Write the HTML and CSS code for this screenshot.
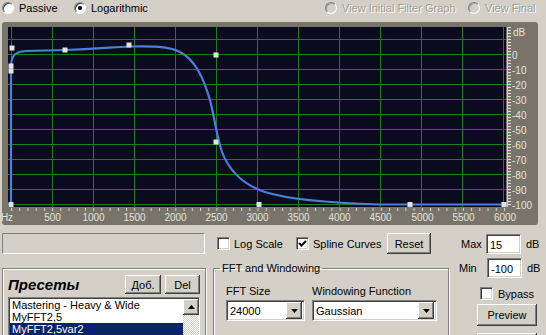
FILE: index.html
```html
<!DOCTYPE html>
<html lang="en">
<head>
    <meta charset="UTF-8">
    <title>FFT Filter</title>
    <link rel="stylesheet" href="styles.css">
</head>
<body>

    <div class="top">
        <label class="radio r1"><span class="dot"></span>Passive</label>
        <label class="radio r2"><span class="dot on"></span>Logarithmic</label>
        <label class="radio r3 off"><span class="dot"></span>View Initial Filter Graph</label>
        <label class="radio r4 off"><span class="dot"></span>View Final</label>
    </div>

    <div class="graph">
        <svg width="536" height="203" viewBox="2 22 536 203">
            <defs>
                <pattern id="xticks" x="11" y="207" width="8.2167" height="5" patternUnits="userSpaceOnUse">
                    <rect x="0" y="1" width="1" height="3" fill="#d8d4cc"/>
                </pattern>
                <pattern id="yticks" x="507" y="27" width="6" height="3" patternUnits="userSpaceOnUse">
                    <rect x="1" y="0" width="3" height="1" fill="#e8dede"/>
                </pattern>
            </defs>
            <rect x="8" y="27" width="498" height="180" fill="#0b0b1f"/>
            <path class="grid" d="M11.5 27V207M52.5 27V207M93.5 27V207M134.5 27V207M175.5 27V207M216.5 27V207M257.5 27V207M298.5 27V207M339.5 27V207M380.5 27V207M421.5 27V207M462.5 27V207M503.5 27V207
                M8 39.5H506M8 54.5H506M8 69.5H506M8 84.5H506M8 99.5H506M8 114.5H506M8 129.5H506M8 144.5H506M8 159.5H506M8 174.5H506M8 189.5H506M8 204.5H506"/>

            <rect x="11" y="207" width="495" height="5" fill="url(#xticks)"/>
            <rect x="507" y="27" width="6" height="180" fill="url(#yticks)"/>
            <path d="M507.5 27V207" stroke="#d8cccc" stroke-width="1"/>

            <path class="curve" d="M11,205 L11,68 C11,56 14,52 26,51 L65,50 C95,49 115,47 129,46.5 C150,46 170,46 180,52 C196,60 204,80 210,100 C215,120 217,138 222,152 C230,173 244,185 265,192 C290,200 330,203 380,204.5 L504,204.5"/>

            <g class="pts">
                <rect x="9.5" y="45.5" width="5" height="5"/>
                <rect x="8.5" y="63.5" width="5" height="5"/>
                <rect x="8.5" y="68.5" width="5" height="5"/>
                <rect x="62.5" y="47.5" width="5" height="5"/>
                <rect x="126.5" y="42.5" width="5" height="5"/>
                <rect x="213.5" y="52.5" width="5" height="5"/>
                <rect x="213.5" y="139.5" width="5" height="5"/>
                <rect x="256.5" y="202" width="5" height="5"/>
                <rect x="407.5" y="202" width="5" height="5"/>
                <rect x="501.5" y="202" width="5" height="5"/>
                <rect x="8.5" y="202" width="5" height="5"/>
            </g>

            <g class="xlab">
                <text x="7" y="221" text-anchor="start">Hz</text>
                <text x="52.5" y="221">500</text>
                <text x="93.5" y="221">1000</text>
                <text x="134.5" y="221">1500</text>
                <text x="175.5" y="221">2000</text>
                <text x="216.5" y="221">2500</text>
                <text x="257.5" y="221">3000</text>
                <text x="298.5" y="221">3500</text>
                <text x="339.5" y="221">4000</text>
                <text x="380.5" y="221">4500</text>
                <text x="422.5" y="221">5000</text>
                <text x="463.5" y="221">5500</text>
                <text x="505" y="221">6000</text>
            </g>
            <g class="ylab">
                <text x="513" y="35.5">dB</text>
                <text x="512" y="58.5">0</text>
                <text x="512" y="73.5">-10</text>
                <text x="512" y="88.5">-20</text>
                <text x="512" y="103.5">-30</text>
                <text x="512" y="118.5">-40</text>
                <text x="512" y="133.5">-50</text>
                <text x="512" y="148.5">-60</text>
                <text x="512" y="163.5">-70</text>
                <text x="512" y="178.5">-80</text>
                <text x="512" y="193.5">-90</text>
                <text x="512" y="208.5">-100</text>
            </g>
        </svg>
    </div>

    <div class="lower">
        <div class="left">
            <div class="ctrls">
                <div class="status"></div>
                <label class="check c-log"><span class="box"></span>Log Scale</label>
                <label class="check c-spline"><span class="box"><svg width="9" height="9" viewBox="0 0 9 9"><path d="M1 4l2.5 2.5L8 2" fill="none" stroke="#000" stroke-width="2"/></svg></span>Spline Curves</label>
                <button class="btn reset">Reset</button>
            </div>

            <div class="groups">
                <div class="presets">
                    <div class="p-head">
                        <span class="p-title">Пресеты</span>
                        <button class="btn p-add">Доб.</button>
                        <button class="btn p-del">Del</button>
                    </div>
                    <div class="list">
                        <div class="items">
                            <div class="item">Mastering - Heavy &amp; Wide</div>
                            <div class="item">MyFFT2,5</div>
                            <div class="item sel">MyFFT2,5var2</div>
                        </div>
                        <div class="scroll">
                            <div class="sb-btn"><svg width="7" height="4" viewBox="0 0 7 4"><path d="M0 4L3.5 0L7 4Z" fill="#000"/></svg></div>
                        </div>
                    </div>
                </div>

                <fieldset class="fft">
                    <legend>FFT and Windowing</legend>
                    <div class="fft-cols">
                        <div class="col c-size">
                            <div class="lbl">FFT Size</div>
                            <div class="select"><span class="val">24000</span><span class="drop"><svg width="7" height="4" viewBox="0 0 7 4"><path d="M0 0L3.5 4L7 0Z" fill="#000"/></svg></span></div>
                        </div>
                        <div class="col c-win">
                            <div class="lbl">Windowing Function</div>
                            <div class="select"><span class="val">Gaussian</span><span class="drop"><svg width="7" height="4" viewBox="0 0 7 4"><path d="M0 0L3.5 4L7 0Z" fill="#000"/></svg></span></div>
                        </div>
                    </div>
                </fieldset>
            </div>
        </div>

        <div class="right">
            <div class="range r-max"><span class="rl">Max</span><span class="edit">15</span><span class="unit">dB</span></div>
            <div class="range r-min"><span class="rl">Min</span><span class="edit">-100</span><span class="unit">dB</span></div>
            <label class="check bypass"><span class="box"></span>Bypass</label>
            <button class="btn preview">Preview</button>
            <button class="btn preview next"></button>
        </div>
    </div>

</body>
</html>
```

FILE: styles.css
```css
body { margin: 0; width: 546px; height: 335px; overflow: hidden; background: #d4d0c8; font: 11px "Liberation Sans", Arial, sans-serif; color: #000; }

/* top radio row */
.top { display: flex; align-items: center; height: 16px; }
.radio { display: flex; align-items: center; gap: 5px; flex: none; }
.r1 { margin-left: 2px; width: 72px; }
.r2 { width: 251px; }
.r3 { width: 143px; }
.radio.off { color: #a19d94; text-shadow: 1px 1px #fff; }
.dot { width: 12px; height: 12px; box-sizing: border-box; border-radius: 50%; background: #fff; border: 1px solid; border-color: #808080 #fff #fff #808080; box-shadow: inset 1px 1px #404040; display: flex; align-items: center; justify-content: center; }
.dot.on::after { content: ""; width: 4px; height: 4px; border-radius: 50%; background: #000; }
.radio.off .dot { background: #d4d0c8; box-shadow: inset 1px 1px #a0a0a0; }

/* graph */
.graph { margin: 6px 0 0 2px; width: 536px; height: 203px; background: #78746a; border-radius: 3px; }
.graph svg { display: block; }
.grid { stroke: #1d7d1d; stroke-width: 1; fill: none; }
.curve { stroke: #4a80d8; stroke-width: 2.2; fill: none; }
.pts rect { fill: #e2e2ea; }
.xlab text { font: 10px "Liberation Sans", Arial, sans-serif; fill: #e4e2dc; text-anchor: middle; }
.ylab text { font: 10px "Liberation Sans", Arial, sans-serif; fill: #e4e2dc; }

/* lower part */
.lower { display: flex; margin-top: 8px; height: 102px; overflow: hidden; }
.left { width: 457px; flex: none; }
.ctrls { display: flex; align-items: center; height: 21px; }
.status { margin-left: 2px; width: 203px; height: 21px; box-sizing: border-box; border: 1px solid; border-color: #808080 #fff #fff #808080; }
.check { display: flex; align-items: center; gap: 4px; flex: none; }
.c-log { margin-left: 12px; width: 79px; }
.c-spline { width: 91px; }
.box { width: 13px; height: 13px; box-sizing: border-box; background: #fff; border: 1px solid; border-color: #808080 #fff #fff #808080; box-shadow: inset 1px 1px #404040, inset -1px -1px #d4d0c8; display: flex; align-items: center; justify-content: center; }

.btn { font: 11px "Liberation Sans", Arial, sans-serif; color: #000; background: #d4d0c8; border: none; padding: 0; box-shadow: inset -1px -1px #404040, inset 1px 1px #fff, inset -2px -2px #808080, inset 2px 2px #d4d0c8; }
.reset { width: 44px; height: 21px; }

.groups { display: flex; align-items: flex-start; margin-top: 14px; }
.presets { margin-left: 2px; width: 204px; height: 80px; box-sizing: border-box; border: 1px solid #808080; box-shadow: inset 1px 1px #fff, 1px 1px #fff; padding: 6px 5px 0 5px; }
.p-head { display: flex; align-items: center; gap: 4px; height: 19px; }
.p-title { flex: 1; font-size: 15px; font-weight: bold; font-style: italic; }
.p-add { width: 36px; height: 19px; }
.p-del { width: 35px; height: 19px; }
.list { margin-top: 3px; height: 48px; display: flex; background: #fff; border: 1px solid; border-color: #808080 #fff #fff #808080; box-shadow: inset 1px 1px #404040; padding: 1px 0 0 1px; }
.items { flex: 1; }
.item { height: 12px; line-height: 12px; padding-left: 2px; white-space: nowrap; }
.item.sel { background: #0a246a; color: #fff; }
.scroll { width: 16px; background: repeating-conic-gradient(#d4d0c8 0 25%, #fff 0 50%) 0 0 / 2px 2px; }
.sb-btn { height: 16px; display: flex; align-items: center; justify-content: center; background: #d4d0c8; box-shadow: inset -1px -1px #404040, inset 1px 1px #fff, inset -2px -2px #808080; }

.fft { margin: -6px 0 0 7px; width: 236px; height: 86px; box-sizing: border-box; padding: 0 0 0 12px; border: 1px solid #808080; box-shadow: inset 1px 1px #fff, 1px 1px #fff; }
.fft legend { padding: 0 2px; margin-left: -6px; line-height: 12px; }
.fft-cols { display: flex; gap: 7px; }
.col { display: flex; flex-direction: column; }
.c-size { width: 79px; }
.c-win { width: 125px; }
.lbl { margin-top: 11px; height: 13px; line-height: 13px; }
.select { margin-top: 2px; height: 21px; box-sizing: border-box; display: flex; align-items: center; background: #fff; border: 1px solid; border-color: #808080 #fff #fff #808080; box-shadow: inset 1px 1px #404040, inset -1px -1px #d4d0c8; padding: 2px; }
.val { flex: 1; padding-left: 1px; }
.drop { width: 16px; height: 17px; display: flex; align-items: center; justify-content: center; background: #d4d0c8; box-shadow: inset -1px -1px #404040, inset 1px 1px #fff, inset -2px -2px #808080; }

.right { flex: none; width: 85px; padding-left: 2px; }
.range { display: flex; align-items: center; height: 20px; }
.r-max { margin-top: 1px; }
.r-min { margin-top: 4px; }
.r-max .rl { margin-left: 2px; width: 25px; }
.r-min .rl { width: 28px; }
.edit { width: 35px; height: 20px; box-sizing: border-box; line-height: 16px; padding: 2px 0 0 3px; background: #fff; border: 1px solid; border-color: #808080 #fff #fff #808080; box-shadow: inset 1px 1px #404040, inset -1px -1px #d4d0c8; }
.unit { margin-left: 5px; }
.bypass { margin: 9px 0 0 21px; gap: 5px; }
.preview { display: block; margin: 4px 0 0 18px; width: 60px; height: 22px; }
.preview.next { margin-top: 7px; }
```
